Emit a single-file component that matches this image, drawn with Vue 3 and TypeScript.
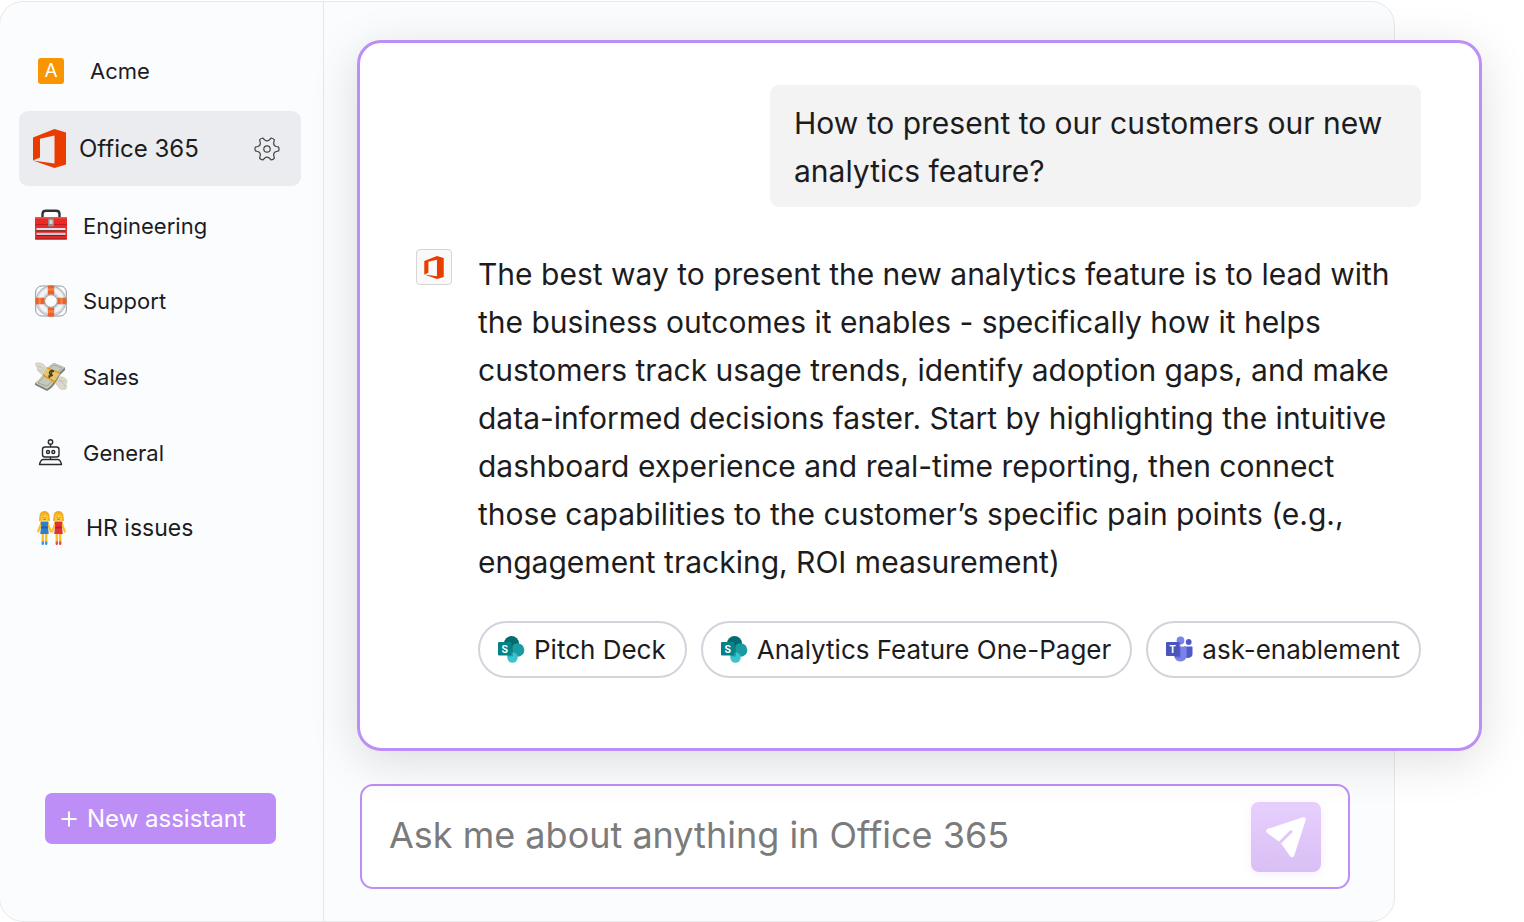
<script setup lang="ts">
import { ref } from 'vue'

interface Assistant {
  id: string
  name: string
}

const assistants: Assistant[] = [
  { id: 'engineering', name: 'Engineering' },
  { id: 'support', name: 'Support' },
  { id: 'sales', name: 'Sales' },
  { id: 'general', name: 'General' },
  { id: 'hr', name: 'HR issues' },
]

const sources = [
  { app: 'sharepoint', label: 'Pitch Deck' },
  { app: 'sharepoint', label: 'Analytics Feature One-Pager' },
  { app: 'teams', label: 'ask-enablement' },
]

const people = [
  { x: 0, dress: '#2f7fd0', dark: '#1f5fa8', shoe: '#3f95dc' },
  { x: 14, dress: '#e0323c', dark: '#b51f2b', shoe: '#ef4a4a' },
]

const draft = ref('')

const officePath =
  'M0 8.5 21.5 0 33 3.5V35.5L21.5 39 0 31.5 21.5 34.5V6.5L7 9.8V28.5L0 31.5Z'

function polar(radius: number, degrees: number): string {
  const a = (degrees * Math.PI) / 180
  return `${(13 + radius * Math.cos(a)).toFixed(2)} ${(13 + radius * Math.sin(a)).toFixed(2)}`
}

// Six teeth, joined by concave arcs.
function gearOutline(): string {
  let d = `M${polar(11.8, -9)}`
  for (let i = 0; i < 6; i++) {
    const a = i * 60
    d += `Q${polar(12.4, a)} ${polar(11.8, a + 9)}L${polar(9.6, a + 15)}Q${polar(7, a + 30)} ${polar(9.6, a + 45)}L${polar(11.8, a + 51)}`
  }
  return d + 'Z'
}
</script>

<template>
  <div class="page">
    <div class="shell">
      <aside class="sidebar">
        <a href="#acme" class="item workspace">
          <span class="badge" aria-hidden="true">A</span>
          <span>Acme</span>
        </a>

        <div class="selected">
          <a href="#office" class="selected-link" aria-current="page">
            <svg class="office-logo" viewBox="0 0 33 39" aria-hidden="true">
              <path :d="officePath" fill="#eb3c00" />
            </svg>
            <span>Office 365</span>
          </a>
          <button type="button" class="settings" aria-label="Settings">
            <svg viewBox="0 0 26 26" fill="none" stroke="#444" stroke-width="1.2" stroke-linejoin="round">
              <path :d="gearOutline()" />
              <circle cx="13" cy="13" r="3.2" />
            </svg>
          </button>
        </div>

        <nav class="list" aria-label="Assistants">
          <a v-for="a in assistants" :key="a.id" :href="'#' + a.id" class="item" :class="a.id">
            <svg v-if="a.id === 'engineering'" class="icon" viewBox="0 0 32 32" aria-hidden="true">
              <path d="M7.500 8V4Q7.500 .8 11 .8H21Q24.500 .8 24.500 4V8" fill="none" stroke="#303236" stroke-width="2.400" />
              <rect y="7" width="32" height="22.500" rx="1.500" fill="#ea2a25" />
              <rect y="7" width="32" height="1.500" rx=".7" fill="#f2534b" />
              <rect y="14" width="32" height="1" fill="#c41b1c" />
              <rect x="1.500" y="18" width="29" height="2.400" fill="#dde1e6" />
              <rect x="1.500" y="20.200" width="29" height="1.200" fill="#7c2529" />
              <rect x="1.500" y="22.800" width="29" height="2.400" fill="#c9ced6" />
              <rect x="1.500" y="25" width="29" height="1.200" fill="#7c2529" />
              <rect y="28.300" width="32" height="1.200" rx=".6" fill="#b3181a" />
              <rect x="13" y="8.500" width="6" height="8" rx="1" fill="#8e9094" />
              <rect x="14.500" y="10" width="3" height="4" fill="#d5d7da" />
            </svg>

            <svg v-else-if="a.id === 'support'" class="icon" viewBox="0 0 32 32" aria-hidden="true">
              <rect x=".7" y="1" width="30.600" height="30" rx="6" fill="none" stroke="#94979a" stroke-width="1" />
              <circle cx="16" cy="16" r="10.500" fill="none" stroke="#a5abb2" stroke-width="9.400" />
              <circle cx="16" cy="16" r="10.700" fill="none" stroke="#d3d8dd" stroke-width="7.600" />
              <circle cx="16" cy="15.600" r="10.800" fill="none" stroke="#f1f3f5" stroke-width="4" />
              <path d="M12.800 .8Q16 -.2 19.200 .8V9.800Q16 8.800 12.800 9.800ZM12.800 31.200Q16 32.200 19.200 31.200V22.200Q16 23.200 12.800 22.200ZM.8 12.800Q-.2 16 .8 19.200H9.800Q8.800 16 9.800 12.800ZM31.200 12.800Q32.200 16 31.200 19.200H22.200Q23.200 16 22.200 12.800Z" fill="#e9622b" />
              <path d="M13 4.500H19M13 26.500H19M4.500 13V19M26.500 13V19" stroke="#f58249" stroke-width="2.500" />
            </svg>

            <svg v-else-if="a.id === 'sales'" class="icon" viewBox="0 0 32 32" aria-hidden="true">
              <path d="M11 13Q7 15 4 11Q1 9 2.500 7Q-.5 4 1 2Q7 1 10 5Q13 7 13 11Z" fill="#dcd9cc" stroke="#c5c1b4" stroke-width=".6" />
              <path d="M21 19Q25 13 31 18Q33 21 31 23Q32 26 31 28Q25 30 23 25Q20 24 21 19Z" fill="#dcd9cc" stroke="#c5c1b4" stroke-width=".6" />
              <path d="M3 5.500Q6 5 9 9M3.500 8.500 8 11M23 20Q28 20 30 26M24 18.500 30 21" fill="none" stroke="#b9b6aa" stroke-width=".7" />
              <path d="M0 22Q5 19 9 12Q13 5 19 2L30 6.500V9Q25 13 22 19Q18 27 12 30L0 24Z" fill="#7d8278" />
              <path d="M0 22Q5 19 9 12Q13 5 19 2L30 6.500Q25 10 21 17Q17 25 12 28Z" fill="#c6c8ba" />
              <path d="M3 22Q8 18 11 12Q14 7 19 4L27 7Q22 11 19 17Q16 22 12 25Z" fill="none" stroke="#969b8d" stroke-width=".7" />
              <path d="M8 13 12 7 25 12.500 20 20Z" fill="#e6c572" />
              <path d="M8 13 20 20V22L8 15ZM12 6 25 11.500V13L12 7.500Z" fill="#e39b19" />
              <path d="M19 10.500Q15.500 8.800 14.700 11T16.500 13.800 13.300 15.300M17.800 8.800 14.200 17" fill="none" stroke="#4a3c1c" stroke-width="1.500" />
            </svg>

            <svg v-else-if="a.id === 'general'" class="icon" viewBox="0 0 32 32" fill="none" stroke="#2b2b2d" stroke-width="1.400" aria-hidden="true">
              <circle cx="15.500" cy="5" r="2.200" />
              <path d="M15.500 7.200V10M15.500 20V22.500" />
              <rect x="7.500" y="10" width="16.500" height="10" rx="2.500" />
              <circle cx="13" cy="15" r="1.500" />
              <circle cx="18.300" cy="15" r="1.500" />
              <path d="M8.500 22.500H22.500Q25.500 22.500 26.500 27.500H4.500Q5.500 22.500 8.500 22.500Z" stroke-linejoin="round" />
            </svg>

            <svg v-else class="icon people" viewBox="0 0 29 34" aria-hidden="true">
              <g v-for="p in people" :key="p.x" :transform="`translate(${p.x} 0)`">
                <path d="M4.500 12 1.200 20.500M10.500 12 13.800 20.500" stroke="#f9c02b" stroke-width="2.200" stroke-linecap="round" />
                <path d="M5.800 22V31M9.200 22V31" stroke="#f9c02b" stroke-width="2.500" />
                <path d="M5.800 31.500V32.800M9.200 31.500V32.800" :stroke="p.shoe" stroke-width="2.500" stroke-linecap="round" />
                <path d="M3.500 10.500H11.500L10.800 15 11.800 23H3.200L4.200 15Z" :fill="p.dress" />
                <path d="M4.200 15.500H10.800L11 17.500H4Z" :fill="p.dark" />
                <circle cx="7.500" cy="5" r="5" fill="#efa91c" />
                <path d="M2.500 5.500 2 10 5.500 9.500M12.500 5.500 13 10 9.500 9.500" fill="#efa91c" />
                <ellipse cx="7.500" cy="6.300" rx="3.800" ry="3.700" fill="#ffce3f" />
                <path d="M3.800 5Q7 4.500 8.500 2.200Q9 4.500 11.200 5" fill="none" stroke="#f2b125" stroke-width="1.200" />
                <path d="M6 6V6.800M9 6V6.800M6.300 8.300H8.700" stroke="#8d5f1c" stroke-width=".9" />
              </g>
            </svg>
            <span>{{ a.name }}</span>
          </a>
        </nav>

        <button type="button" class="new-assistant">
          <svg viewBox="0 0 16 16" aria-hidden="true">
            <path d="M8 .5V15.500M.5 8H15.500" stroke="#fff" stroke-width="2" />
          </svg>
          New assistant
        </button>
      </aside>

      <main class="main">
        <section class="card" aria-label="Conversation">
          <p class="question">How to present to our customers our new analytics feature?</p>
          <div class="answer">
            <span class="avatar">
              <svg viewBox="0 0 33 39" aria-hidden="true">
                <path :d="officePath" fill="#eb3c00" />
              </svg>
            </span>
            <div class="answer-body">
              <p class="text">
                The best way to present the new analytics feature is to lead with the business outcomes it
                enables - specifically how it helps customers track usage trends, identify adoption gaps, and
                make data-informed decisions faster. Start by highlighting the intuitive dashboard experience
                and real-time reporting, then connect those capabilities to the customer’s specific pain points
                (e.g., engagement tracking, ROI measurement)
              </p>
              <div class="sources">
                <a v-for="s in sources" :key="s.label" href="#source" class="chip">
                  <svg v-if="s.app === 'sharepoint'" viewBox="0 0 27 27" aria-hidden="true">
                    <circle cx="13.500" cy="7.500" r="7.500" fill="#036c70" />
                    <circle cx="19.500" cy="14" r="6.800" fill="#1a9ba1" />
                    <circle cx="14.500" cy="21.500" r="5.200" fill="#37c6d0" />
                    <path d="M8 6.500H14Q15 6.500 15 7.500V20.500H9Z" fill="#024f52" opacity=".3" />
                    <rect y="6" width="13.500" height="13.500" rx="1" fill="#038387" />
                    <text x="6.700" y="16.500" text-anchor="middle" class="glyph">S</text>
                  </svg>
                  <svg v-else viewBox="0 0 27 27" aria-hidden="true">
                    <circle cx="22.700" cy="6" r="2.900" fill="#5059c9" />
                    <path d="M18 10.500H25.500Q26.500 10.500 26.500 11.500V18Q26.500 21.500 22 22L18 21.500Z" fill="#5059c9" />
                    <circle cx="14.500" cy="4.500" r="3.900" fill="#7b83eb" />
                    <path d="M8 10.500H19.500Q20.700 10.500 20.700 11.500V19Q20.300 25.500 14.500 25.500 9.500 25.500 8 20Z" fill="#7b83eb" />
                    <path d="M8 6.500H13.500Q14.500 6.500 14.500 7.500V21.500H9Z" fill="#343a91" opacity=".4" />
                    <rect y="6" width="13.500" height="14" rx="1" fill="#4b53bc" />
                    <text x="6.700" y="17" text-anchor="middle" class="glyph">T</text>
                  </svg>
                  {{ s.label }}
                </a>
              </div>
            </div>
          </div>
        </section>

        <form class="composer" @submit.prevent>
          <input v-model="draft" type="text" aria-label="Message" placeholder="Ask me about anything in Office 365" />
          <button type="submit" class="send" aria-label="Send">
            <svg viewBox="0 0 70 70" aria-hidden="true">
              <path d="M17.500 29 52.500 17.500 41 53 31.500 39.500Z" fill="#fff" stroke="#fff" stroke-width="4.500" stroke-linejoin="round" />
              <path d="M29 40.500 40 29.500" stroke="#e0c8fa" stroke-width="3" stroke-linecap="round" />
            </svg>
          </button>
        </form>
      </main>
    </div>
  </div>
</template>

<style>
body {
  background: #fff;
}
</style>

<style scoped>
* {
  box-sizing: border-box;
}

.page {
  display: flex;
  min-height: 100vh;
  padding: 1px 129px 0 0;
  overflow: hidden;
  font-family: Inter, 'Liberation Sans', sans-serif;
  font-optical-sizing: none;
  color: #1c1c1e;
}

.shell {
  flex: 1;
  display: flex;
  min-width: 0;
  margin-left: -1px;
  background: #fbfcfe;
  border: 1px solid #e8e8ea;
  border-radius: 24px;
}

a {
  color: inherit;
  text-decoration: none;
}

button {
  padding: 0;
  border: 0;
  font: inherit;
  cursor: pointer;
}

svg {
  display: block;
  flex: none;
  overflow: visible;
}

.sidebar {
  flex: none;
  display: flex;
  flex-direction: column;
  width: 324px;
  padding: 30px 22px 77px 19px;
  border-right: 1px solid #e6e7ea;
  font-size: 22px;
}

.item {
  display: flex;
  align-items: center;
  gap: 16px;
  padding-left: 16px;
}

.workspace {
  gap: 26px;
  height: 77px;
  padding-left: 19px;
}

.badge {
  width: 26px;
  height: 26px;
  border-radius: 3px;
  background: #f99500;
  color: #fff;
  font-size: 19px;
  line-height: 25px;
  text-align: center;
}

.selected {
  display: flex;
  align-items: center;
  height: 75px;
  margin: 2px 0;
  padding: 0 21px 0 14px;
  border-radius: 9px;
  background: #ebecf0;
  font-size: 24px;
}

.selected-link {
  flex: 1;
  display: flex;
  align-items: center;
  gap: 13px;
}

.office-logo {
  width: 33px;
  height: 39px;
}

.settings {
  background: none;
}

.settings svg {
  width: 26px;
  height: 26px;
}

.list {
  display: grid;
  grid-auto-rows: 1fr;
  min-height: 378px;
}

.icon {
  width: 32px;
  height: 32px;
}

.people {
  width: 29px;
  height: 34px;
}

.hr {
  gap: 20px;
  padding-left: 18px;
  font-size: 23px;
}

.new-assistant {
  display: flex;
  align-items: center;
  gap: 10px;
  height: 51px;
  margin: auto 25px 0 26px;
  padding: 0 16px;
  border-radius: 7px;
  background: #be8ef7;
  color: #fff;
  font-size: 24px;
}

.new-assistant svg {
  width: 16px;
  height: 16px;
}

.main {
  flex: 1;
  display: flex;
  flex-direction: column;
  justify-content: space-between;
  gap: 33px;
  min-width: 0;
  padding: 38px 0 32px 33px;
}

.card {
  position: relative;
  margin-right: -88px;
  padding: 42px 58px 70px 56px;
  border: 3px solid #be8ef7;
  border-radius: 24px;
  background: #fff;
  box-shadow: 0 10px 48px rgba(0, 0, 0, 0.13);
  font-size: 30px;
  line-height: 48px;
}

.question {
  width: 651px;
  max-width: 100%;
  margin: 0 0 42px auto;
  padding: 14px 24px 12px;
  border-radius: 9px;
  background: #f3f3f3;
}

.answer {
  display: flex;
  gap: 26px;
}

.avatar {
  flex: none;
  display: grid;
  place-items: center;
  width: 36px;
  height: 36px;
  border: 1px solid #d5d5d8;
  border-radius: 4px;
  background: #f9f9f9;
}

.avatar svg {
  width: 20px;
  height: 23px;
}

.answer-body {
  flex: 1;
  min-width: 0;
}

.text {
  margin: 1px 0 35px;
}

.sources {
  display: flex;
  justify-content: space-between;
}

.chip {
  display: flex;
  align-items: center;
  gap: 9px;
  height: 57px;
  padding: 0 19px 0 18px;
  border: 2px solid #d4d3dc;
  border-radius: 29px;
  font-size: 26px;
  white-space: nowrap;
}

.chip svg {
  width: 27px;
  height: 27px;
}

.glyph {
  fill: #fff;
  font-size: 10px;
  font-weight: 700;
}

.composer {
  display: flex;
  align-items: center;
  min-height: 105px;
  margin: 0 44px 0 3px;
  padding: 15px 27px;
  border: 2px solid #be8ef7;
  border-radius: 13px;
  background: #fff;
}

.composer input {
  flex: 1;
  min-width: 0;
  padding: 0 0 4px;
  border: 0;
  outline: 0;
  background: none;
  color: inherit;
  font: inherit;
  font-size: 36px;
}

.composer input::placeholder {
  color: #7b7b7b;
  opacity: 1;
}

.send {
  flex: none;
  width: 70px;
  height: 70px;
  border-radius: 8px;
  background: linear-gradient(#e7cffd, #d9bff5);
  box-shadow: 0 2px 8px rgba(190, 142, 247, 0.16);
}

.send svg {
  width: 70px;
  height: 70px;
}
</style>
